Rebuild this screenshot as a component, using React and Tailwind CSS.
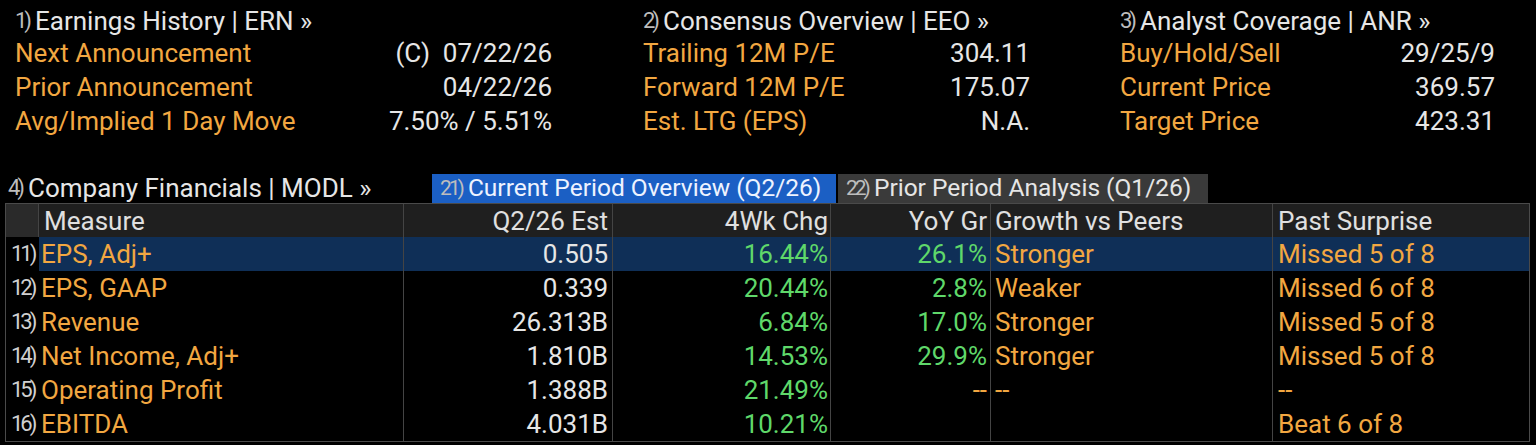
const ORANGE = "text-[#f2a741]";
const WHITE = "text-[#e6e6e6]";
const GREEN = "text-[#5fd86a]";

const summary = [
  {
    n: "1)",
    title: "Earnings History | ERN »",
    rows: [
      ["Next Announcement", "(C)  07/22/26"],
      ["Prior Announcement", "04/22/26"],
      ["Avg/Implied 1 Day Move", "7.50% / 5.51%"],
    ],
    left: "ml-[15px] w-[537px]",
  },
  {
    n: "2)",
    title: "Consensus Overview | EEO »",
    rows: [
      ["Trailing 12M P/E", "304.11"],
      ["Forward 12M P/E", "175.07"],
      ["Est. LTG (EPS)", "N.A."],
    ],
    left: "ml-[91px] w-[387px]",
  },
  {
    n: "3)",
    title: "Analyst Coverage | ANR »",
    rows: [
      ["Buy/Hold/Sell", "29/25/9"],
      ["Current Price", "369.57"],
      ["Target Price", "423.31"],
    ],
    left: "ml-[90px] w-[375px]",
  },
];

const measures = [
  { n: "11)", name: "EPS, Adj+", est: "0.505", chg: "16.44%", yoy: "26.1%", peers: "Stronger", surprise: "Missed 5 of 8" },
  { n: "12)", name: "EPS, GAAP", est: "0.339", chg: "20.44%", yoy: "2.8%", peers: "Weaker", surprise: "Missed 6 of 8" },
  { n: "13)", name: "Revenue", est: "26.313B", chg: "6.84%", yoy: "17.0%", peers: "Stronger", surprise: "Missed 5 of 8" },
  { n: "14)", name: "Net Income, Adj+", est: "1.810B", chg: "14.53%", yoy: "29.9%", peers: "Stronger", surprise: "Missed 5 of 8" },
  { n: "15)", name: "Operating Profit", est: "1.388B", chg: "21.49%", yoy: "--", peers: "--", surprise: "--" },
  { n: "16)", name: "EBITDA", est: "4.031B", chg: "10.21%", yoy: "", peers: "", surprise: "Beat 6 of 8" },
];

const cols = "grid grid-cols-[33px_365px_209px_218px_160px_282px_1fr]";

// condensed menu-number prefix, e.g. "21)"
function Num({ children, className = "" }) {
  return (
    <span className={`inline-block tracking-[-3px] text-[#bdbdbd] mr-[6px] ${className}`}>
      {children}
    </span>
  );
}

export default function App() {
  return (
    <div
      className="w-[1536px] h-[445px] bg-black overflow-hidden text-[26px] leading-none"
      style={{ fontFamily: 'Roboto, "Liberation Sans", sans-serif' }}
    >
      {/* summary blocks */}
      <div className="flex pt-[6px]">
        {summary.map((s) => (
          <div key={s.n} className={s.left}>
            <div className={`h-[30px] flex items-center ${WHITE}`}>
              <Num className="text-[22px]">{s.n}</Num>
              {s.title}
            </div>
            {s.rows.map(([k, v]) => (
              <div key={k} className="h-[34px] flex items-center justify-between">
                <span className={ORANGE}>{k}</span>
                <span className={`${WHITE} whitespace-pre`}>{v}</span>
              </div>
            ))}
          </div>
        ))}
      </div>

      {/* financials header + tabs */}
      <div className="flex items-end mt-[34px] h-[31px]">
        <div className={`ml-[8px] w-[424px] h-[30px] flex items-center ${WHITE}`}>
          <Num className="text-[22px]">4)</Num>
          Company Financials | MODL »
        </div>
        <div className="w-[404px] h-[29px] bg-[#1b5fc4] flex items-center pl-[8px] text-[#eef3ff] text-[24.5px]">
          <Num className="text-[#bcd3ff] text-[21px]">21)</Num>
          Current Period Overview (Q2/26)
        </div>
        <div className="ml-[2px] w-[370px] h-[29px] bg-[#3a3a3a] flex items-center pl-[8px] text-[#e6e6e6] text-[24.5px]">
          <Num className="text-[21px]">22)</Num>
          Prior Period Analysis (Q1/26)
        </div>
      </div>

      {/* table */}
      <div className="ml-[5px] w-[1525px] border border-[#4a4a4a]">
        <div className={`${cols} h-[33px] bg-[#1f1f1f] text-[#e0e0e0]`}>
          <div className="bg-[#2a2a2a] border-r border-[#444]" />
          <div className="flex items-center pl-[5px] border-r border-[#444]">Measure</div>
          <div className="flex items-center justify-end pr-[4px] border-r border-[#444]">Q2/26 Est</div>
          <div className="flex items-center justify-end pr-[2px] border-r border-[#444]">4Wk Chg</div>
          <div className="flex items-center justify-end pr-[3px] border-r border-[#444]">YoY Gr</div>
          <div className="flex items-center pl-[4px] border-r border-[#444]">Growth vs Peers</div>
          <div className="flex items-center pl-[5px]">Past Surprise</div>
        </div>
        {measures.map((m, i) => {
          const sel = i === 0;
          const bg = sel ? "bg-[#0f2f57]" : "";
          return (
            <div key={m.n} className={`${cols} h-[34px]`}>
              <div className="flex items-center pl-[5px]">
                <Num className="text-[#d0d0d0] text-[22px]">{m.n}</Num>
              </div>
              <div className={`${bg} flex items-center pl-[2px] border-r border-[#444] ${ORANGE}`}>{m.name}</div>
              <div className={`${bg} flex items-center justify-end pr-[4px] border-r border-[#444] ${WHITE}`}>{m.est}</div>
              <div className={`${bg} flex items-center justify-end pr-[2px] border-r border-[#444] ${GREEN}`}>{m.chg}</div>
              <div
                className={`${bg} flex items-center justify-end pr-[3px] border-r border-[#444] ${
                  m.yoy === "--" ? ORANGE : GREEN
                }`}
              >
                {m.yoy}
              </div>
              <div className={`${bg} flex items-center pl-[4px] border-r border-[#444] ${ORANGE}`}>{m.peers}</div>
              <div className={`${bg} flex items-center pl-[5px] ${ORANGE}`}>{m.surprise}</div>
            </div>
          );
        })}
      </div>
    </div>
  );
}
